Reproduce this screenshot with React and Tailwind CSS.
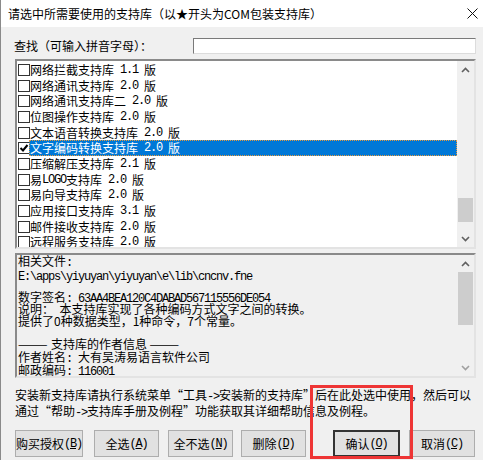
import React from 'react';

const CJK = "font-['Noto_Sans_CJK_SC',sans-serif]";
const MONO = "font-['Liberation_Mono',monospace] text-[12px] tracking-[-1.2px]";

const LIBS = [
    { name: '网络拦截支持库', ver: '1.1' },
    { name: '网络通讯支持库', ver: '2.0' },
    { name: '网络通讯支持库二', ver: '2.0' },
    { name: '位图操作支持库', ver: '2.0' },
    { name: '文本语音转换支持库', ver: '2.0' },
    { name: '文字编码转换支持库', ver: '2.0', checked: true, selected: true },
    { name: '压缩解压支持库', ver: '2.1' },
    { name: '易LOGO支持库', ver: '2.0', logo: true },
    { name: '易向导支持库', ver: '2.0' },
    { name: '应用接口支持库', ver: '3.1' },
    { name: '邮件接收支持库', ver: '2.0' },
    { name: '远程服务支持库', ver: '2.0' },
];

const Mono = ({ children }) => <span className={MONO}>{children}</span>;

const Chevron = ({ down, color = '#606060' }) => (
    <svg width="9" height="6" viewBox="0 0 9 6">
        <polyline
            points={down ? '1,1 4.5,4.5 8,1' : '1,5 4.5,1.5 8,5'}
            fill="none"
            stroke={color}
            strokeWidth="1.6"
        />
    </svg>
);

const ScrollBar = ({ thumbTop, thumbHeight, downColor }) => (
    <div className="w-[17px] h-full bg-[#f0f0f0] flex flex-col">
        <div className="h-[17px] flex items-center justify-center"><Chevron /></div>
        <div className="flex-1">
            <div className="mx-[1px] bg-[#cdcdcd]" style={{ marginTop: thumbTop, height: thumbHeight }} />
        </div>
        <div className="h-[17px] flex items-center justify-center"><Chevron down color={downColor} /></div>
    </div>
);

const Check = ({ checked }) => (
    <div className="w-[12px] h-[12px] border border-[#333] bg-white flex items-center justify-center shrink-0">
        {checked && (
            <svg width="10" height="10" viewBox="0 0 10 10">
                <polyline points="1.5,5 4,7.5 8.5,2" fill="none" stroke="#000" strokeWidth="2" />
            </svg>
        )}
    </div>
);

const LibRow = ({ lib }) => (
    <div className="h-[15.7px] flex items-center">
        <div className="ml-[1px]"><Check checked={lib.checked} /></div>
        <div
            className={`h-full flex items-center whitespace-pre text-[12px] leading-none ${lib.selected
                ? 'flex-1 bg-[#0078d7] text-white border border-dotted border-[#e89a3c] -ml-[1px]'
                : 'text-black'
                }`}
        >
            {lib.logo ? (
                <>易<Mono>LOGO</Mono>支持库</>
            ) : lib.name}
            <Mono>{` ${lib.ver} `}</Mono>版
        </div>
    </div>
);

const Button = ({ label, hot, width, ml, primary }) => (
    <button
        className={`h-[27px] bg-[#e1e1e1] text-[12px] text-black flex items-center justify-center whitespace-nowrap ${primary ? 'border-2 border-[#333]' : 'border border-[#adadad]'}`}
        style={{ width, marginLeft: ml }}
    >
        {label}<Mono>(<span className="underline">{hot}</span>)</Mono>
    </button>
);

export default function App() {
    return (
        <div className={`relative w-[483px] h-[460px] bg-[#f0f0f0] border-l border-[#8a8a8a] overflow-hidden text-black ${CJK}`}>
            {/* Title bar */}
            <div className="h-[27px] bg-white flex items-center pl-[7px] pr-[5px]">
                <span className="text-[12px]">请选中所需要使用的支持库（以★开头为COM包装支持库）</span>
                <svg className="ml-auto" width="11" height="11" viewBox="0 0 11 11">
                    <path d="M0.5 0.5 L10.5 10.5 M10.5 0.5 L0.5 10.5" stroke="#111" strokeWidth="1" />
                </svg>
            </div>

            {/* Search */}
            <div className="mt-[11px] h-[16px] flex items-center">
                <span className="ml-[13px] text-[12px]">查找（可输入拼音字母）：</span>
                <div className="ml-auto mr-[7px] w-[283px] h-[16px] bg-white border border-t-[#7a7a7a] border-l-[#7a7a7a] border-b-[#dcdcdc] border-r-[#dcdcdc]" />
            </div>

            {/* Library list */}
            <div className="mt-[5px] ml-[14px] w-[461px] h-[190px] bg-white border-2 border-t-[#8a8a8a] border-l-[#8a8a8a] border-b-[#e3e3e3] border-r-[#e3e3e3] flex">
                <div className="flex-1 overflow-hidden pt-[1px]">
                    {LIBS.map((lib, i) => <LibRow key={i} lib={lib} />)}
                </div>
                <ScrollBar thumbTop={120} thumbHeight={24} />
            </div>

            {/* Info panel */}
            <div className="mt-[4px] ml-[14px] w-[461px] h-[125px] border-2 border-t-[#8a8a8a] border-l-[#8a8a8a] border-b-[#e3e3e3] border-r-[#e3e3e3] flex">
                <div className="flex-1 overflow-hidden pl-[1px] text-[12px] whitespace-pre">
                    <div className="h-[12px] leading-[12px]">相关文件<Mono>:</Mono></div>
                    <div className="h-[15px] leading-[15px]"><Mono>{'E:\\apps\\yiyuyan\\yiyuyan\\e\\lib\\cncnv.fne'}</Mono></div>
                    <div className="h-[9px]" />
                    <div className="h-[12px] leading-[12px]">数字签名<span className={`${MONO} tracking-[-0.9px]`}>: 63AA4BEA120C4DABAD567115556DE054</span></div>
                    <div className="h-[12px] leading-[12px]">说明：  本支持库实现了各种编码方式文字之间的转换。</div>
                    <div className="h-[12px] leading-[12px]">提供了0种数据类型，1种命令，7个常量。</div>
                    <div className="h-[11px]" />
                    <div className="h-[12px] leading-[12px]"><span className="tracking-[-2px]">———</span>  支持库的作者信息 <span className="tracking-[-2px]">———</span></div>
                    <div className="h-[13px] leading-[13px]">作者姓名<Mono>: </Mono>大有吴涛易语言软件公司</div>
                    <div className="h-[13px] leading-[13px]">邮政编码<Mono>: 116001</Mono></div>
                </div>
                <ScrollBar thumbTop={0} thumbHeight={53} downColor="#a0a0a0" />
            </div>

            {/* Hint */}
            <div className="mt-[10px] ml-[14px] text-[12px] leading-[13px] whitespace-nowrap">
                <div>安装新支持库请执行系统菜单“工具<Mono>-&gt;</Mono>安装新的支持库”后在此处选中使用，然后可以</div>
                <div>通过“帮助<Mono>-&gt;</Mono>支持库手册及例程”功能获取其详细帮助信息及例程。</div>
            </div>

            {/* Buttons */}
            <div className="mt-[10px] flex">
                <Button label="购买授权" hot="B" width={68} ml={14} />
                <Button label="全选" hot="A" width={65} ml={11} />
                <Button label="全不选" hot="N" width={65} ml={9} />
                <Button label="删除" hot="D" width={65} ml={8} />
                <Button label="确认" hot="O" width={67} ml={27} primary />
                <Button label="取消" hot="C" width={66} ml={9} />
            </div>

            {/* Red annotation box */}
            <div className="absolute left-[309px] top-[385px] w-[103px] h-[74px] border-[3px] border-[#ee3535] pointer-events-none" />
        </div>
    );
}
